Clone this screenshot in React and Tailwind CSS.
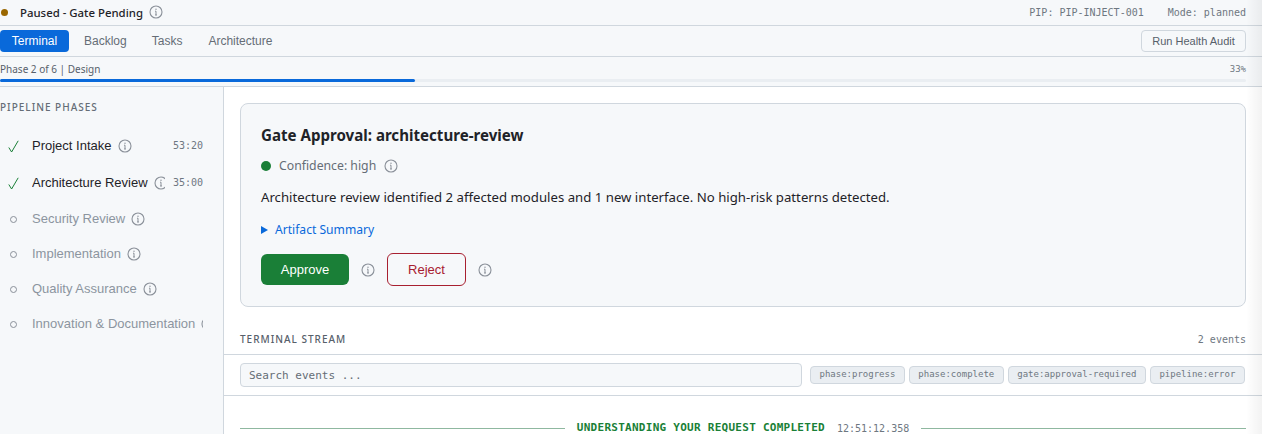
import React from "react";

const sans = "font-['Noto_Sans',sans-serif]";
const arial = "font-['Liberation_Sans',Arial,sans-serif]";
const mono = "font-['DejaVu_Sans_Mono',monospace]";

const InfoIcon = ({ className = "" }) => (
  <svg viewBox="0 0 14 14" fill="none" className={`w-[14px] h-[14px] shrink-0 text-[#8a9099] ${className}`}>
    <circle cx="7" cy="7" r="6" stroke="currentColor" strokeWidth="1.1" />
    <path d="M7 6.2V10M6 10h2M6 6.2h1" stroke="currentColor" strokeWidth="1" />
    <circle cx="7" cy="4.2" r="0.7" fill="currentColor" />
  </svg>
);

const phases = [
  { name: "Project Intake", time: "53:20", done: true },
  { name: "Architecture Review", time: "35:00", done: true },
  { name: "Security Review" },
  { name: "Implementation" },
  { name: "Quality Assurance" },
  { name: "Innovation & Documentation" },
];

const filters = ["phase:progress", "phase:complete", "gate:approval-required", "pipeline:error"];

const PhaseRow = ({ phase }) => (
  <div className={`flex items-center pl-2 pr-5 ${phase.done ? "h-[37px]" : "h-[35px]"}`}>
    <span className="w-[24px] shrink-0 flex items-center">
      {phase.done ? (
        <svg viewBox="0 0 11 13" fill="none" className="w-[11px] h-[13px] mt-[2px]">
          <path d="M0.8 7.5 L3.6 12 L10.2 0.8" stroke="#1a7f37" strokeWidth="1" />
        </svg>
      ) : (
        <span className="ml-[2px] mt-[1px] w-[7px] h-[7px] rounded-full border border-[#8a9099]" />
      )}
    </span>
    <div className="flex items-center gap-[6px] min-w-0 flex-1 overflow-hidden">
      <span className={`${arial} text-[13px] whitespace-nowrap ${phase.done ? "text-[#1f2328]" : "text-[#8c959f]"}`}>
        {phase.name}
      </span>
      <InfoIcon />
    </div>
    {phase.time && <span className={`${mono} text-[10px] text-[#6e7781] ml-2 shrink-0`}>{phase.time}</span>}
  </div>
);

export default function App() {
  return (
    <div className="relative h-[434px] w-[1262px] overflow-hidden bg-white">
      {/* status bar */}
      <div className="h-[26px] bg-[#f6f8fa] border-b border-[#d0d7de] flex items-center justify-between pl-[1px] pr-4">
        <div className="flex items-center">
          <span className="w-[7px] h-[7px] rounded-full bg-[#9a6700]" />
          <span className={`${sans} text-[11.4px] font-medium text-[#1f2328] ml-3`}>Paused - Gate Pending</span>
          <InfoIcon className="ml-[6px]" />
        </div>
        <div className={`${mono} text-[10px] text-[#6e7781] flex gap-6`}>
          <span>PIP: PIP-INJECT-001</span>
          <span>Mode: planned</span>
        </div>
      </div>

      {/* tabs */}
      <div className="h-[31px] bg-[#f6f8fa] border-b border-[#d0d7de] flex items-center justify-between pr-4">
        <div className={`${arial} flex items-center text-[12px] text-[#656d76]`}>
          <span className="h-[22px] w-[69px] flex items-center justify-center rounded bg-[#0969da] text-white">Terminal</span>
          <span className="ml-[15px]">Backlog</span>
          <span className="ml-[25px]">Tasks</span>
          <span className="ml-[26px]">Architecture</span>
        </div>
        <button className={`${arial} h-[22px] w-[105px] rounded border border-[#d0d7de] text-[11px] text-[#57606a]`}>
          Run Health Audit
        </button>
      </div>

      {/* progress */}
      <div className="h-[30px] bg-[#f6f8fa] border-b border-[#d0d7de] pr-4 pt-[6px]">
        <div className="flex items-center justify-between h-[13px]">
          <span className={`${sans} text-[10px] text-[#57606a]`}>Phase 2 of 6 | Design</span>
          <span className={`${mono} text-[9px] text-[#6e7781]`}>33%</span>
        </div>
        <div className="mt-[3px] h-[3px] bg-[#eaeef2] rounded-sm">
          <div className="h-full w-[33.33%] bg-[#0969da] rounded-sm" />
        </div>
      </div>

      <div className="flex">
        {/* sidebar */}
        <aside className="w-[224px] h-[348px] shrink-0 bg-[#f6f8fa] border-r border-[#d0d7de]">
          <div className={`${sans} text-[10px] font-medium tracking-[0.1em] text-[#656d76] pt-[13px] h-[40px]`}>
            PIPELINE PHASES
          </div>
          {phases.map((phase) => (
            <PhaseRow key={phase.name} phase={phase} />
          ))}
        </aside>

        {/* main */}
        <main className="flex-1 min-w-0 pt-4">
          <div className="mx-4 h-[204px] rounded-lg border border-[#d0d7de] bg-[#f6f8fa] px-5 pt-5">
            <h2 className={`${sans} text-[15.1px] font-bold leading-[22px] text-[#1f2328]`}>Gate Approval: architecture-review</h2>
            <div className="flex items-center mt-[10px] h-[20px]">
              <span className="w-[10px] h-[10px] rounded-full bg-[#1a7f37] -mt-[1px]" />
              <span className={`${sans} text-[12.25px] text-[#656d76] ml-2`}>Confidence: high</span>
              <InfoIcon className="ml-2" />
            </div>
            <p className={`${sans} text-[13.2px] leading-[20px] text-[#1f2328] mt-[11px]`}>
              Architecture review identified 2 affected modules and 1 new interface. No high-risk patterns detected.
            </p>
            <div className="flex items-center mt-[13px] h-[20px]">
              <span className="w-0 h-0 border-y-[4px] border-y-transparent border-l-[7px] border-l-[#0969da]" />
              <span className={`${sans} text-[12.1px] text-[#0969da] ml-[7px]`}>Artifact Summary</span>
            </div>
            <div className={`${arial} flex items-center mt-[13px] text-[13px]`}>
              <button className="h-[31px] w-[88px] rounded-md bg-[#1a7f37] text-white">Approve</button>
              <InfoIcon className="ml-3" />
              <button className="ml-3 h-[33px] w-[79px] rounded-md border border-[#a82030] text-[#a82030]">Reject</button>
              <InfoIcon className="ml-3" />
            </div>
          </div>

          {/* terminal stream */}
          <div className="mt-[18px] h-[30px] border-b border-[#d0d7de] px-4 flex items-center justify-between">
            <span className={`${sans} text-[10px] font-medium tracking-[0.1em] text-[#57606a]`}>TERMINAL STREAM</span>
            <span className={`${mono} text-[10px] text-[#6e7781]`}>2 events</span>
          </div>
          <div className="h-[41px] border-b border-[#d0d7de] px-4 flex items-center">
            <input
              readOnly
              placeholder="Search events ..."
              className={`${mono} w-[562px] h-[24px] rounded border border-[#d0d7de] bg-[#f6f8fa] px-2 text-[11px] placeholder:text-[#656d76] outline-none`}
            />
            <div className="flex gap-1 ml-2">
              {filters.map((f) => (
                <span
                  key={f}
                  className={`${mono} h-[18px] px-[8.5px] flex items-center rounded border border-[#d0d7de] bg-[#eaeef2] text-[9px] text-[#6e7781]`}
                >
                  {f}
                </span>
              ))}
            </div>
          </div>
          <div className="px-4 pt-6 flex items-center">
            <div className="flex-1 h-px bg-[#8fb8a0]" />
            <span className={`${mono} mx-3 text-[11px] font-bold tracking-[0.27px] text-[#1a7f37] whitespace-nowrap`}>
              UNDERSTANDING YOUR REQUEST COMPLETED
            </span>
            <span className={`${mono} text-[10px] text-[#6e7781] mr-3 whitespace-nowrap`}>12:51:12.358</span>
            <div className="flex-1 h-px bg-[#8fb8a0]" />
          </div>
        </main>
      </div>

      {/* drawer shadow on right edge */}
      <div className="absolute top-0 right-0 bottom-0 w-[16px] bg-gradient-to-r from-transparent to-black/5" />
    </div>
  );
}
